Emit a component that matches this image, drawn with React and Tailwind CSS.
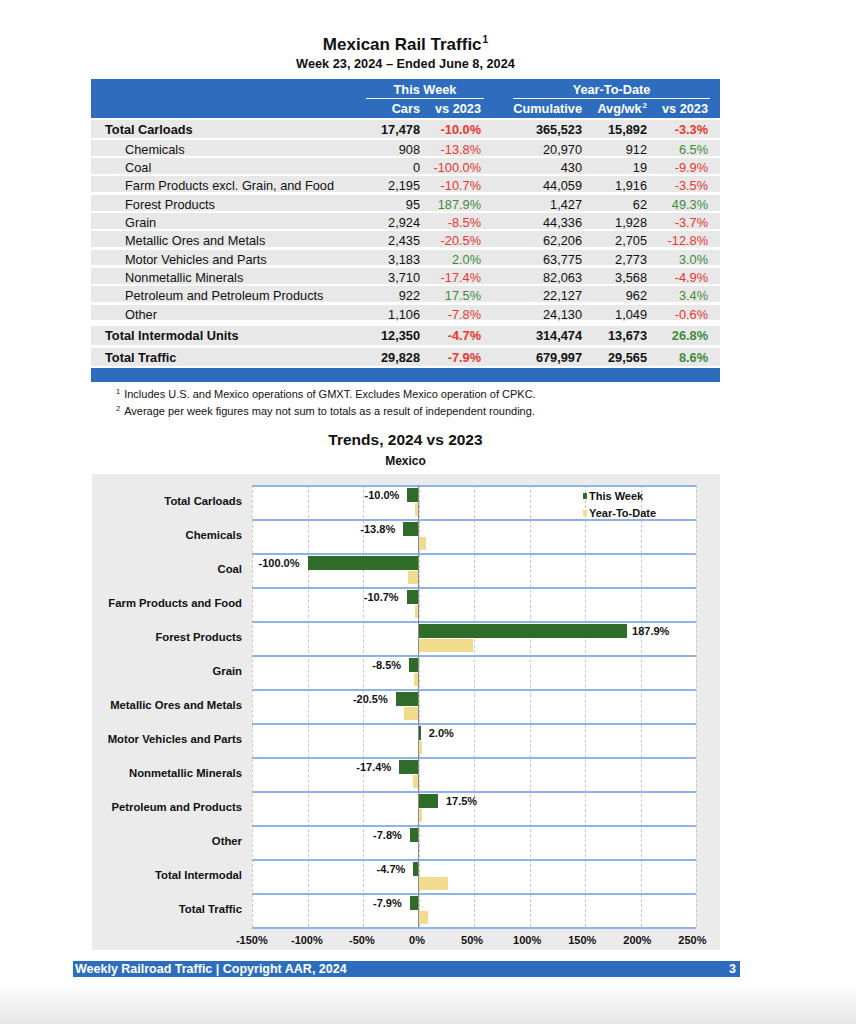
import React from 'react'

const rows = [
  { label: 'Chemicals', cars: '908', wk: '-13.8%', cum: '20,970', avg: '912', ytd: '6.5%' },
  { label: 'Coal', cars: '0', wk: '-100.0%', cum: '430', avg: '19', ytd: '-9.9%' },
  { label: 'Farm Products excl. Grain, and Food', cars: '2,195', wk: '-10.7%', cum: '44,059', avg: '1,916', ytd: '-3.5%' },
  { label: 'Forest Products', cars: '95', wk: '187.9%', cum: '1,427', avg: '62', ytd: '49.3%' },
  { label: 'Grain', cars: '2,924', wk: '-8.5%', cum: '44,336', avg: '1,928', ytd: '-3.7%' },
  { label: 'Metallic Ores and Metals', cars: '2,435', wk: '-20.5%', cum: '62,206', avg: '2,705', ytd: '-12.8%' },
  { label: 'Motor Vehicles and Parts', cars: '3,183', wk: '2.0%', cum: '63,775', avg: '2,773', ytd: '3.0%' },
  { label: 'Nonmetallic Minerals', cars: '3,710', wk: '-17.4%', cum: '82,063', avg: '3,568', ytd: '-4.9%' },
  { label: 'Petroleum and Petroleum Products', cars: '922', wk: '17.5%', cum: '22,127', avg: '962', ytd: '3.4%' },
  { label: 'Other', cars: '1,106', wk: '-7.8%', cum: '24,130', avg: '1,049', ytd: '-0.6%' },
]

const carloads = { label: 'Total Carloads', cars: '17,478', wk: '-10.0%', cum: '365,523', avg: '15,892', ytd: '-3.3%' }
const intermodal = { label: 'Total Intermodal Units', cars: '12,350', wk: '-4.7%', cum: '314,474', avg: '13,673', ytd: '26.8%' }
const traffic = { label: 'Total Traffic', cars: '29,828', wk: '-7.9%', cum: '679,997', avg: '29,565', ytd: '8.6%' }

const trends = [
  ['Total Carloads', -10.0, -3.3],
  ['Chemicals', -13.8, 6.5],
  ['Coal', -100.0, -9.9],
  ['Farm Products and Food', -10.7, -3.5],
  ['Forest Products', 187.9, 49.3],
  ['Grain', -8.5, -3.7],
  ['Metallic Ores and Metals', -20.5, -12.8],
  ['Motor Vehicles and Parts', 2.0, 3.0],
  ['Nonmetallic Minerals', -17.4, -4.9],
  ['Petroleum and Products', 17.5, 3.4],
  ['Other', -7.8, -0.6],
  ['Total Intermodal', -4.7, 26.8],
  ['Total Traffic', -7.9, 8.6],
]

const ticks = ['-150%', '-100%', '-50%', '0%', '50%', '100%', '150%', '200%', '250%']

const ZERO = 166.5
const PX = 1.11

const tone = (v) => (v.startsWith('-') ? 'text-[#e8372f]' : 'text-[#3d8c3a]')

const cols = 'grid grid-cols-[275px_54px_61px_101px_65px_61px_12px] items-center'

const DataRow = ({ r, bold, height }) => (
  <div className={`${cols} bg-[#e8e8e8] ${height} ${bold ? 'font-bold' : ''}`}>
    <div className={bold ? 'pl-[14px]' : 'pl-[34px]'}>{r.label}</div>
    <div className="text-right">{r.cars}</div>
    <div className={`text-right ${tone(r.wk)}`}>{r.wk}</div>
    <div className="text-right">{r.cum}</div>
    <div className="text-right">{r.avg}</div>
    <div className={`text-right ${tone(r.ytd)}`}>{r.ytd}</div>
    <div />
  </div>
)

const fmt = (v) => `${v.toFixed(1)}%`

const TrendRow = ({ wk, ytd }) => {
  const gLeft = wk < 0 ? ZERO + wk * PX : ZERO
  const yLeft = ytd < 0 ? ZERO + ytd * PX : ZERO
  return (
    <div className="relative h-[34px] border-t-2 border-[#8fb4e3]">
      <div className="absolute top-[1px] h-[14px] bg-[#2f6c29]" style={{ left: gLeft, width: Math.abs(wk) * PX }} />
      <div className="absolute top-[16px] h-[13px] bg-[#f0dc8c]" style={{ left: yLeft, width: Math.abs(ytd) * PX }} />
      {wk < 0 ? (
        <div className="absolute top-[2px] leading-[12px] text-[11px] font-bold" style={{ right: 444 - gLeft + 8 }}>
          {fmt(wk)}
        </div>
      ) : (
        <div className="absolute top-[2px] leading-[12px] text-[11px] font-bold" style={{ left: gLeft + wk * PX + (wk > 100 ? 5 : 8) }}>
          {fmt(wk)}
        </div>
      )}
    </div>
  )
}

export default function App() {
  return (
    <div className="relative w-[856px] h-[1024px] bg-white text-[#111] font-['Liberation_Sans',Arial,sans-serif] overflow-hidden">
      <div className="ml-[91px] w-[629px] pt-[34px]">
        <h1 className="text-center text-[17px] font-bold leading-[22px]">
          Mexican Rail Traffic<sup className="text-[10px] -top-[7px] ml-[1px]">1</sup>
        </h1>
        <p className="text-center text-[12.75px] font-bold leading-[16px]">Week 23, 2024 – Ended June 8, 2024</p>

        <div className="mt-[7px] text-[12.75px]">
          <div className="h-[39px] bg-[#2e6dbd] text-white font-bold pt-[3px]">
            <div className={cols}>
              <div />
              <div className="col-span-2 mr-[-3px] border-b border-white text-center leading-[15px] pb-[1px]">This Week</div>
              <div className="col-span-3 ml-[32px] mr-[-2px] border-b border-white text-center leading-[15px] pb-[1px]">Year-To-Date</div>
              <div />
            </div>
            <div className={`${cols} leading-[18px] mt-[1px]`}>
              <div />
              <div className="text-right">Cars</div>
              <div className="text-right">vs 2023</div>
              <div className="text-right">Cumulative</div>
              <div className="text-right">
                Avg/wk<sup className="text-[8px] -top-[5px] ml-[1px]">2</sup>
              </div>
              <div className="text-right">vs 2023</div>
              <div />
            </div>
          </div>

          <div className="mt-[2.3px]">
            <DataRow r={carloads} bold height="h-[18px]" />
          </div>
          <div className="mt-[1.5px] flex flex-col gap-[2.53px]">
            {rows.map((r) => (
              <DataRow key={r.label} r={r} height="h-[15.8px]" />
            ))}
          </div>
          <div className="mt-[5.5px]">
            <DataRow r={intermodal} bold height="h-[19px]" />
          </div>
          <div className="mt-[3px]">
            <DataRow r={traffic} bold height="h-[18px]" />
          </div>
          <div className="mt-[2px] h-[14.5px] bg-[#2e6dbd]" />
        </div>

        <div className="mt-[4px] text-[11px] leading-[17px]">
          <p className="pl-[25px]">
            <sup className="text-[7.5px] -top-[4px] mr-[4px]">1</sup>
            Includes U.S. and Mexico operations of GMXT. Excludes Mexico operation of CPKC.
          </p>
          <p className="pl-[25px]">
            <sup className="text-[7.5px] -top-[4px] mr-[4px]">2</sup>
            Average per week figures may not sum to totals as a result of independent rounding.
          </p>
        </div>

        <h2 className="mt-[9.5px] text-center text-[15.5px] font-bold leading-[20px]">Trends, 2024 vs 2023</h2>
        <p className="mt-[3px] text-center text-[12px] font-bold leading-[16px]">Mexico</p>
      </div>

      <div className="mt-[5px] ml-[92px] w-[628px] bg-[#ebebeb] pt-[11px] pb-[4px]">
        <div className="flex">
          <div className="w-[160px] flex flex-col">
            {trends.map(([label]) => (
              <div key={label} className="h-[34px] flex items-center justify-end pr-[10px] text-[11.3px] font-bold">
                {label}
              </div>
            ))}
          </div>
          <div className="relative w-[444px] bg-white border-b-2 border-[#8fb4e3]">
            {ticks.map((t, i) => (
              <div
                key={t}
                className="absolute top-0 bottom-0 border-l border-dashed border-[#c8c8c8]"
                style={{ left: i * 55.5 }}
              />
            ))}
            {trends.map(([label, wk, ytd]) => (
              <TrendRow key={label} wk={wk} ytd={ytd} />
            ))}
            <div className="absolute top-0 bottom-0 left-[166px] w-px bg-[#8c8c8c]" />
            <div className="absolute left-[331px] top-[3px] text-[11px] font-bold leading-[17px]">
              <div className="flex items-center gap-[2px]">
                <span className="w-[4px] h-[6px] bg-[#2f6c29]" />
                This Week
              </div>
              <div className="flex items-center gap-[2px]">
                <span className="w-[4px] h-[6px] bg-[#f0dc8c]" />
                Year-To-Date
              </div>
            </div>
          </div>
        </div>
        <div className="flex ml-[132.25px] mt-[5px] text-[11px] font-bold leading-[12px]">
          {ticks.map((t) => (
            <div key={t} className="w-[55.5px] text-center">
              {t}
            </div>
          ))}
        </div>
      </div>

      <div className="mt-[11px] ml-[73px] w-[667px] h-[16px] bg-[#2e6dbd] text-white font-bold text-[12.5px] leading-[16px] flex justify-between px-[2px]">
        <span>Weekly Railroad Traffic | Copyright AAR, 2024</span>
        <span className="pr-[2px]">3</span>
      </div>

      <div className="absolute left-0 right-0 bottom-0 h-[42px] bg-linear-to-b from-white to-[#e6e6e6]" />
    </div>
  )
}
